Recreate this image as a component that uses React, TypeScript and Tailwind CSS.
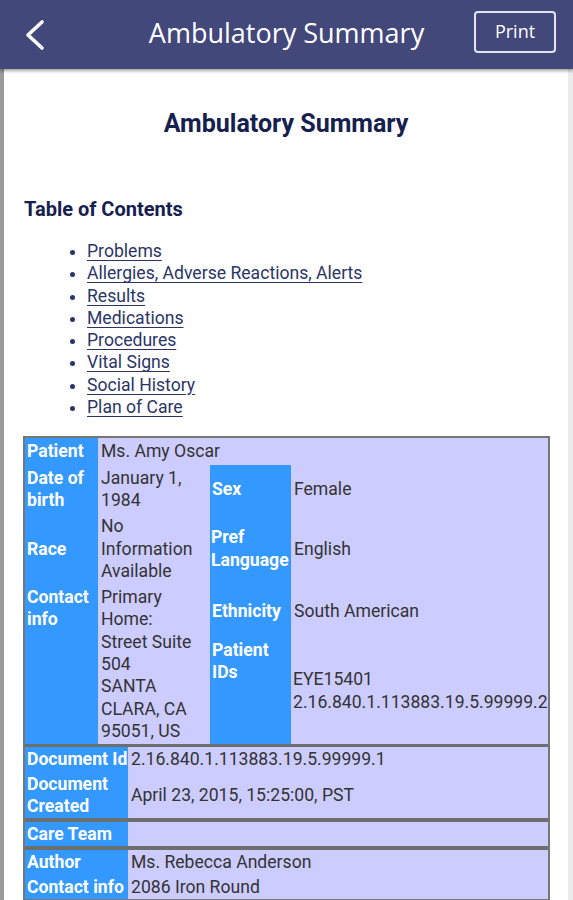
import React from "react";

const toc = [
  "Problems",
  "Allergies, Adverse Reactions, Alerts",
  "Results",
  "Medications",
  "Procedures",
  "Vital Signs",
  "Social History",
  "Plan of Care",
];

const address = ["Primary", "Home:", "Street Suite", "504", "SANTA", "CLARA, CA", "95051, US"];

const th = "bg-[#3399ff] px-[2px] text-left font-bold text-white";
const td = "bg-[#ccccff] px-[3px] font-normal text-[#333]";

export default function App() {
  return (
    <div className="min-h-[900px] bg-[#ececec] font-['Roboto',sans-serif]">
      <header className="relative z-10 flex h-[69px] items-center bg-[#43487b] shadow-[0_2px_3px_rgba(0,0,0,0.35)]">
        <button type="button" className="ml-[22px] flex h-[34px] w-[28px] items-center">
          <svg width="26" height="32" viewBox="0 0 26 32" fill="none">
            <polyline
              points="20,3 6,16 20,29"
              stroke="white"
              strokeWidth="3.6"
              strokeLinecap="round"
              strokeLinejoin="round"
            />
          </svg>
        </button>
        <h1 className="mt-[-4px] flex-1 pl-[49px] text-center font-['Open_Sans',sans-serif] text-[27px] leading-none text-white">
          Ambulatory Summary
        </h1>
        <button
          type="button"
          className="mr-[17px] mt-[-6px] h-[42px] w-[82px] rounded-[4px] border-2 border-[#e4e4f4] font-['Open_Sans',sans-serif] text-[18px] text-white"
        >
          Print
        </button>
      </header>

      <main className="mr-[5px] border-l-4 border-[#9a9a9a] bg-white pb-4">
        <h2 className="pt-[40px] text-center text-[25px] font-bold leading-[30px] text-[#15204f]">
          Ambulatory Summary
        </h2>

        <h3 className="ml-[20px] mt-[58px] text-[20px] font-bold leading-[24px] text-[#15204f]">
          Table of Contents
        </h3>

        <ul className="mt-[19px] list-disc pl-[83px] text-[17.6px] leading-[22.3px] text-[#2a3566]">
          {toc.map((item) => (
            <li key={item}>
              <span className="underline decoration-[#2a3566] underline-offset-[3px]">{item}</span>
            </li>
          ))}
        </ul>

        <div className="ml-[19px] mr-[18px] mt-[18px] border-2 border-[#767676] text-[17.6px] leading-[22.3px]">
          <table className="w-full table-fixed border-collapse">
            <colgroup>
              <col className="w-[73px]" />
              <col className="w-[112px]" />
              <col className="w-[81px]" />
              <col />
            </colgroup>
            <tbody>
              <tr>
                <th className={`${th} py-[2px] align-middle`}>Patient</th>
                <td colSpan={3} className={`${td} py-[2px] align-middle`}>
                  Ms. Amy Oscar
                </td>
              </tr>
              <tr>
                <th className={`${th} py-[2px] align-middle`}>Date of birth</th>
                <td className={`${td} py-[2px] align-middle`}>January 1, 1984</td>
                <th className={`${th} py-[2px] align-middle`}>Sex</th>
                <td className={`${td} py-[2px] align-middle`}>Female</td>
              </tr>
              <tr>
                <th className={`${th} py-[2px] align-middle`}>Race</th>
                <td className={`${td} py-[2px] align-middle`}>No Information Available</td>
                <th className={`${th} py-[2px] pl-[1px] pr-0 align-middle`}>Pref Language</th>
                <td className={`${td} py-[2px] align-middle`}>English</td>
              </tr>
              <tr>
                <th rowSpan={2} className={`${th} py-[2px] align-top`}>
                  Contact info
                </th>
                <td rowSpan={2} className={`${td} py-[2px] align-top`}>
                  {address.map((line) => (
                    <div key={line}>{line}</div>
                  ))}
                </td>
                <th className={`${th} h-[53px] py-[2px] align-middle`}>Ethnicity</th>
                <td className={`${td} h-[53px] py-[2px] align-middle`}>South American</td>
              </tr>
              <tr>
                <th className={`${th} py-[2px] align-top`}>Patient IDs</th>
                <td className={`${td} py-[2px] pl-[2px] pr-0 align-middle whitespace-nowrap`}>
                  EYE15401
                  <br />
                  2.16.840.1.113883.19.5.99999.2
                </td>
              </tr>
            </tbody>
          </table>

          <table className="w-full table-fixed border-collapse border-t-[3px] border-[#6e6e6e]">
            <colgroup>
              <col className="w-[103px]" />
              <col />
            </colgroup>
            <tbody>
              <tr>
                <th className={`${th} py-[1px] whitespace-nowrap`}>Document Id</th>
                <td className={`${td} py-[1px]`}>2.16.840.1.113883.19.5.99999.1</td>
              </tr>
              <tr>
                <th className={`${th} py-[1px]`}>
                  Document
                  <br />
                  Created
                </th>
                <td className={`${td} py-[1px] align-middle`}>April 23, 2015, 15:25:00, PST</td>
              </tr>
            </tbody>
          </table>

          <table className="w-full table-fixed border-collapse border-t-4 border-[#6e6e6e]">
            <colgroup>
              <col className="w-[103px]" />
              <col />
            </colgroup>
            <tbody>
              <tr>
                <th className={`${th} py-[1px]`}>Care Team</th>
                <td className={`${td} py-[1px]`}></td>
              </tr>
            </tbody>
          </table>

          <table className="w-full table-fixed border-collapse border-t-4 border-[#6e6e6e]">
            <colgroup>
              <col className="w-[103px]" />
              <col />
            </colgroup>
            <tbody>
              <tr>
                <th className={`${th} py-[1px]`}>Author</th>
                <td className={`${td} py-[1px]`}>Ms. Rebecca Anderson</td>
              </tr>
              <tr>
                <th className={`${th} py-[1px] whitespace-nowrap`}>Contact info</th>
                <td className={`${td} py-[1px]`}>2086 Iron Round</td>
              </tr>
            </tbody>
          </table>
        </div>
      </main>
    </div>
  );
}
